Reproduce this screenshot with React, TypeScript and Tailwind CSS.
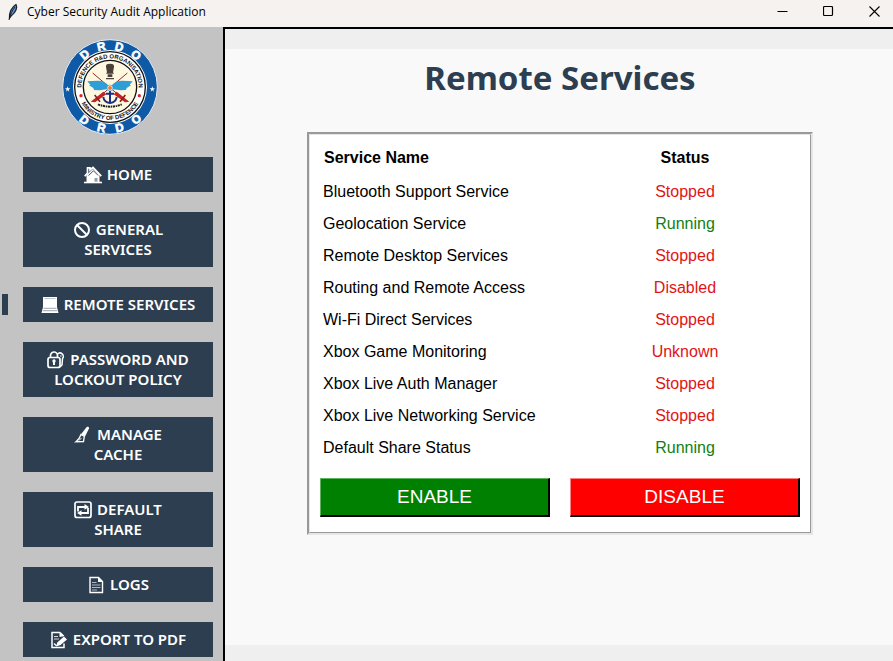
import type { ReactNode } from "react";

const UI_FONT = "font-['Segoe_UI','Noto_Sans',sans-serif]";

type NavItem = { lines: string[]; icon: ReactNode; active?: boolean };

function Glyph({ children }: { children: ReactNode }) {
  return (
    <svg
      viewBox="0 0 18 18"
      width="18"
      height="18"
      fill="none"
      stroke="currentColor"
      strokeWidth="1.7"
      className="mr-[5px] inline-block shrink-0 align-[-4px]"
      aria-hidden="true"
    >
      {children}
    </svg>
  );
}

const HomeIcon = (
  <Glyph>
    <path d="M2.500 9 9 3l6.500 6v8h-13z" fill="currentColor" stroke="none" />
    <path d="M.7 10.200 3.500 7V1.800H6V4L9 1.500l8.300 8.700" strokeWidth="1.700" />
    <path d="M4.500 9.500 9.500 4.800l4.700 4.700" stroke="#2c3e50" strokeWidth=".9" />
    <path d="M10.500 12h3v4h-3z" fill="#2c3e50" stroke="none" opacity=".5" />
    <path d="M0 16.500h18" strokeWidth="1.600" />
  </Glyph>
);

const BlockIcon = (
  <Glyph>
    <circle cx="9" cy="9" r="7" strokeWidth="2" />
    <path d="m4 4 10 10" strokeWidth="2" />
  </Glyph>
);

const LaptopIcon = (
  <Glyph>
    <path d="M2 1h14v10.500H2z" fill="currentColor" stroke="none" />
    <path d="M3.500 2.500h11" stroke="#2c3e50" strokeWidth=".6" opacity=".5" />
    <path d="M2 11h14l1.500 6H.5z" fill="currentColor" stroke="none" />
    <path d="M2.500 12.300h13M2 14.700h14" stroke="#2c3e50" strokeWidth=".8" opacity=".6" />
  </Glyph>
);

const LockIcon = (
  <Glyph>
    <rect x="1" y="6.500" width="12" height="10" rx="2" />
    <path d="M3.500 6V4.500a3.500 3.500 0 0 1 7 0V6" />
    <path d="M10.500 3.200a3.200 3.200 0 1 1 5 4.300L15 14l-2 2" strokeWidth="1.500" />
    <circle cx="7" cy="10" r="1.700" fill="currentColor" stroke="none" />
    <path d="M7 10v4" strokeWidth="2" />
    <path d="M13.800 4.500v1" />
  </Glyph>
);

const BrushIcon = (
  <Glyph>
    <path d="M12.500 1.200c1-1 3-.2 2.500 1.200L11 10.500 7 8.300z" fill="currentColor" stroke="none" />
    <path d="M7 8.500 10.300 10.500 9.500 15.500 2 15.800C4.500 14 6 11.500 7 8.500z" strokeWidth="1.300" />
    <path d="m5 14.500 2.500-2.500" strokeWidth="1" />
  </Glyph>
);

const ShareIcon = (
  <Glyph>
    <rect x="1" y="1" width="16" height="15.500" rx="2" />
    <path d="M4 10.500V6h8M14 7v5H6" strokeWidth="1.800" />
    <path d="m10.500 3 4.500 3-4.500 2.700zM7.500 9.300 3 12l4.500 2.800z" fill="currentColor" stroke="none" />
  </Glyph>
);

const PageIcon = (
  <Glyph>
    <path d="M3 1.500h8.500L15.500 5.500v11H3z" strokeWidth="1.400" />
    <path d="M11 1v5h5z" fill="currentColor" stroke="none" />
    <path d="M5 6.500h4.500M5 9h8.500M5 11.500h8.500M5 14h5" strokeWidth=".9" opacity=".7" />
  </Glyph>
);

const MemoIcon = (
  <Glyph>
    <path d="M10 1.500H2v15h12v-4M10 1.500l3.500 3.500" strokeWidth="1.500" />
    <path d="M9.500 1v5l5-1z" fill="currentColor" stroke="none" />
    <path d="M4 5.500h4M4 8h5" strokeWidth="1" opacity=".8" />
    <path d="m14 5.500 3 3-6.500 5.500-4.500 1.500 1.500-4.300z" fill="currentColor" stroke="none" />
    <path d="m4 12.500 2.500 2.300" strokeWidth="1.400" />
  </Glyph>
);

const NAV: NavItem[] = [
  { lines: ["HOME"], icon: HomeIcon },
  { lines: ["GENERAL", "SERVICES"], icon: BlockIcon },
  { lines: ["REMOTE SERVICES"], icon: LaptopIcon, active: true },
  { lines: ["PASSWORD AND", "LOCKOUT POLICY"], icon: LockIcon },
  { lines: ["MANAGE", "CACHE"], icon: BrushIcon },
  { lines: ["DEFAULT", "SHARE"], icon: ShareIcon },
  { lines: ["LOGS"], icon: PageIcon },
  { lines: ["EXPORT TO PDF"], icon: MemoIcon },
];

const SERVICES: [string, string][] = [
  ["Bluetooth Support Service", "Stopped"],
  ["Geolocation Service", "Running"],
  ["Remote Desktop Services", "Stopped"],
  ["Routing and Remote Access", "Disabled"],
  ["Wi-Fi Direct Services", "Stopped"],
  ["Xbox Game Monitoring", "Unknown"],
  ["Xbox Live Auth Manager", "Stopped"],
  ["Xbox Live Networking Service", "Stopped"],
  ["Default Share Status", "Running"],
];

const RING_LETTERS: [string, number][] = [
  ["D", -38],
  ["R", -12],
  ["D", 13],
  ["O", 39],
];

function Emblem() {
  return (
    <svg viewBox="0 0 288 288" className="size-24" role="img" aria-label="DRDO emblem">
      <circle cx="144" cy="144" r="142" fill="#0f5aa6" stroke="#e8eef5" strokeWidth="3" />
      <circle cx="144" cy="144" r="111" fill="#fff" />
      <circle cx="144" cy="144" r="106" fill="none" stroke="#111" strokeWidth="4" />
      <circle cx="144" cy="144" r="80" fill="#fdf8df" stroke="#111" strokeWidth="4" />
      <g
        fill="#fff"
        stroke="#fff"
        strokeWidth="2"
        fontFamily="Liberation Sans, sans-serif"
        fontWeight="700"
        fontSize="35"
        textAnchor="middle"
      >
        {RING_LETTERS.map(([letter, angle], i) => (
          <text key={`t${i}`} x="144" y="32" transform={`rotate(${angle} 144 144)`}>
            {letter}
          </text>
        ))}
        {RING_LETTERS.map(([letter, angle], i) => (
          <text key={`b${i}`} x="144" y="281" transform={`rotate(${-angle} 144 144)`}>
            {letter}
          </text>
        ))}
      </g>
      <defs>
        <path id="arc-top" d="M58 144a86 86 0 0 1 172 0" />
        <path id="arc-bottom" d="M45 144a99 99 0 0 0 198 0" />
      </defs>
      <g fill="#111" fontFamily="Liberation Sans, sans-serif" fontWeight="700" fontSize="18" textAnchor="middle">
        <text>
          <textPath href="#arc-top" startOffset="50%">
            DEFENCE R&amp;D ORGANISATION
          </textPath>
        </text>
        <text>
          <textPath href="#arc-bottom" startOffset="50%">
            MINISTRY OF DEFENCE
          </textPath>
        </text>
      </g>
      <path
        d="m17 142 2 6h6l-5 4 2 6-5-4-5 4 2-6-5-4h6zM271 142l2 6h6l-5 4 2 6-5-4-5 4 2-6-5-4h6z"
        fill="#fff"
      />
      <circle cx="57" cy="170" r="5" fill="#d8262c" />
      <circle cx="232" cy="170" r="5" fill="#d8262c" />
      {/* Lion capital */}
      <path d="M132 84q-2-10 12-10t12 10l-3 16 3 4h-24l3-4z" fill="#4a4238" />
      <path d="M137 106h14v8h-14zM132 117h24v4h-24z" fill="#4a4238" />
      {/* Crossed swords */}
      <path d="m92 102 92 78M196 102l-92 78" stroke="#a3262a" strokeWidth="3" />
      <path d="m86 188 38-30 9 8-34 24zM202 188l-38-30-9 8 34 24z" fill="#bf2427" />
      <path d="m98 168 16 20M190 168l-16 20" stroke="#8f1c1f" strokeWidth="5" />
      {/* Wings */}
      <path d="M140 140q-12-15-34-15l-30 2 9 10-4 2 13 8 2 6 16 1 28-4z" fill="#2e9fd6" />
      <path d="M148 140q12-15 34-15l30 2-9 10 4 2-13 8-2 6-16 1-28-4z" fill="#2e9fd6" />
      {/* Anchor */}
      <path
        d="M144 154v36M132 164h24M124 174q2 16 20 18 18-2 20-18"
        fill="none"
        stroke="#1c2f86"
        strokeWidth="6"
      />
      <circle cx="144" cy="147" r="9" fill="#fff" stroke="#2e9fd6" strokeWidth="2" />
      <circle cx="144" cy="147" r="6" fill="#ef7d2d" />
      <path d="M108 196q36 14 72 0" fill="none" stroke="#222" strokeWidth="6" strokeDasharray="7 2 4 2" />
    </svg>
  );
}

function Feather() {
  return (
    <svg viewBox="0 0 16 18" width="16" height="18" aria-hidden="true">
      <path
        d="M4.500 15C4 10 6.500 4 11 1.500c1.500 2.500.3 7.500-5 11.500z"
        fill="#6791cf"
        stroke="#1b2434"
        strokeWidth="1.300"
      />
      <path d="M4 17C5 11.500 7.500 7 10 4" fill="none" stroke="#111" strokeWidth=".9" />
    </svg>
  );
}

function TitleBar() {
  return (
    <header className="flex h-[27px] items-center justify-between bg-[#f5f2ef] pr-[13px] pb-1 pl-[5px] text-black">
      <div className="flex items-center gap-[6px]">
        <Feather />
        <span className="font-['Segoe_UI','Open_Sans',sans-serif] text-[12px] leading-4">
          Cyber Security Audit Application
        </span>
      </div>
      <div className="flex items-center gap-[35px]">
        <button type="button" aria-label="Minimize">
          <svg viewBox="0 0 11 11" width="11" height="11" className="block">
            <path d="M.5 5.500h10" stroke="#000" />
          </svg>
        </button>
        <button type="button" aria-label="Maximize">
          <svg viewBox="0 0 11 11" width="11" height="11" className="block">
            <rect x=".5" y=".5" width="9" height="9" rx="1" fill="none" stroke="#000" strokeWidth="1.200" />
          </svg>
        </button>
        <button type="button" aria-label="Close">
          <svg viewBox="0 0 11 11" width="11" height="11" className="block">
            <path d="m.5.5 10 10M10.500.5l-10 10" stroke="#000" strokeWidth="1.100" />
          </svg>
        </button>
      </div>
    </header>
  );
}

function Sidebar() {
  return (
    <aside className="w-[223px] shrink-0 bg-[#c3c3c3] pt-3 pr-[10px] pb-1 pl-[2px]">
      <div className="flex justify-center pl-[5px]">
        <Emblem />
      </div>
      <nav className="mt-[22px] flex flex-col gap-5">
        {NAV.map(({ lines, icon, active }) => (
          <div key={lines.join(" ")} className="flex items-center gap-[15px]">
            <span className={`h-[21px] w-[6px] shrink-0 ${active ? "bg-[#2c3e50]" : ""}`} />
            <button
              type="button"
              aria-current={active ? "page" : undefined}
              className={`${UI_FONT} flex-1 bg-[#2c3e50] pt-[7px] pb-2 text-center text-[15px] leading-5 font-semibold text-white`}
            >
              {lines.map((line, i) => (
                <span key={line} className="block h-5 whitespace-nowrap">
                  {i === 0 && icon}
                  {line}
                </span>
              ))}
            </button>
          </div>
        ))}
      </nav>
    </aside>
  );
}

function ServicesCard() {
  return (
    <section className="w-[506px] border-2 border-t-[#999] border-r-[#e6e6e6] border-b-[#e6e6e6] border-l-[#999]">
      <div className="border border-t-[#e6e6e6] border-r-[#999] border-b-[#999] border-l-[#e6e6e6] bg-white pt-[5px] pb-[15px]">
        <table className="w-full table-fixed text-[16px] leading-5 text-black">
          <thead>
            <tr>
              <th scope="col" className="w-1/2 py-2 pl-[14px] text-left font-bold">
                Service Name
              </th>
              <th scope="col" className="w-1/2 py-2 text-center font-bold">
                Status
              </th>
            </tr>
          </thead>
          <tbody>
            {SERVICES.map(([name, status]) => (
              <tr key={name}>
                <td className="py-[6px] pl-[13px]">{name}</td>
                <td className={`py-[6px] text-center ${status === "Running" ? "text-[#118011]" : "text-[#e01414]"}`}>
                  {status}
                </td>
              </tr>
            ))}
          </tbody>
        </table>
        <div className="mt-[14px] grid grid-cols-2 gap-5 px-[10px] text-[19px] leading-[36px] text-white">
          <button
            type="button"
            className="border-t border-r-2 border-b-2 border-l border-t-[#5fb35f] border-r-black border-b-black border-l-[#5fb35f] bg-[#008000]"
          >
            ENABLE
          </button>
          <button
            type="button"
            className="border-t border-r-2 border-b-2 border-l border-t-[#ff8080] border-r-black border-b-black border-l-[#ff8080] bg-[#ff0000]"
          >
            DISABLE
          </button>
        </div>
      </div>
    </section>
  );
}

export default function App() {
  return (
    <div className="flex min-h-screen flex-col font-['Liberation_Sans',Arial,sans-serif]">
      <TitleBar />
      <div className="flex flex-1">
        <Sidebar />
        <main className="flex flex-1 flex-col border-t-2 border-l-2 border-black bg-[#efefef] pt-5 pb-4">
          <div className="flex flex-1 flex-col items-center bg-[#f9f9f9] pt-[5px] pl-[2px]">
            <h1 className={`${UI_FONT} text-[33px] leading-[48px] font-bold text-[#2c3e50]`}>Remote Services</h1>
            <div className="mt-[30px]">
              <ServicesCard />
            </div>
          </div>
        </main>
      </div>
    </div>
  );
}
